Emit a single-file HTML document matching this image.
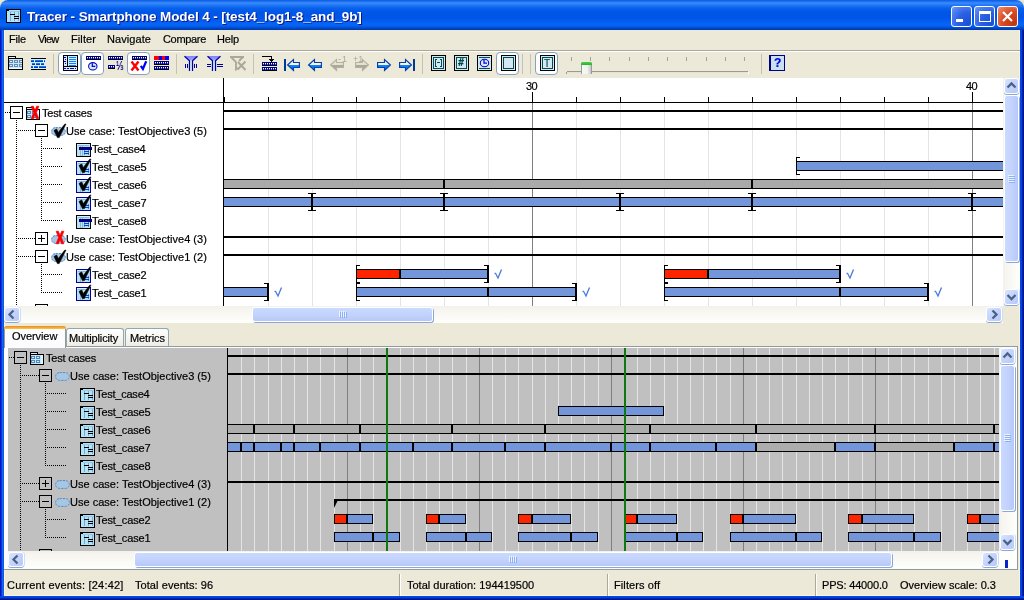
<!DOCTYPE html>
<html lang="en"><head><meta charset="utf-8"><title>Tracer - Smartphone Model 4</title>
<style>
html,body{margin:0;padding:0;}
body{width:1024px;height:600px;overflow:hidden;background:#ECE9D8;position:relative;font-family:"Liberation Sans",sans-serif;font-size:11px;color:#000;}
.a{position:absolute;}
.t{-webkit-text-stroke:0.2px currentColor;will-change:transform;position:absolute;white-space:nowrap;line-height:14px;height:14px;font-size:11px;}
svg{position:absolute;overflow:visible;}
.ce{shape-rendering:crispEdges;}
#title{position:absolute;left:0;top:0;width:1024px;height:30px;border-radius:8px 8px 0 0;
background:linear-gradient(to bottom,#0A5CE0 0px,#1668EC 1px,#3C8CFC 3px,#2278F6 5px,#0862EC 8px,#0056E6 12px,#0055E8 18px,#0560F2 22px,#0666F8 25px,#0058E2 27px,#0049CA 28px,#0038A8 30px);}
#corner-l,#corner-r{position:absolute;top:0;width:8px;height:8px;background:#EDE7C9;}
.ttl{-webkit-text-stroke:0;font-weight:bold;font-size:13.5px;color:#fff;text-shadow:1px 1px 0 #0A1883;line-height:16px;height:16px;}
.wb{position:absolute;width:21px;height:21px;top:6px;border-radius:3px;box-sizing:border-box;border:1px solid #fff;
background:radial-gradient(circle at 85% 85%,#1A50D8 0%,#2B5FE3 45%,#4A7CF0 75%,#6C9BFA 100%);}
.wb.x{background:radial-gradient(circle at 85% 85%,#C13511 0%,#D84A24 50%,#E8734F 80%,#F0987C 100%);}
.bl{position:absolute;left:0;top:30px;width:4px;height:570px;background:linear-gradient(to right,#0016C4 0,#0016C4 1px,#0A36DC 1px,#0A36DC 2px,#1464EE 2px,#1464EE 3px,#0E58E8 3px);}
.br{position:absolute;left:1020px;top:30px;width:4px;height:570px;background:linear-gradient(to right,#0A48E4 0,#0040E0 2px,#0022B0 2px,#0022B0 3px,#001488 3px);}
.bb{position:absolute;left:0;top:596px;width:1024px;height:4px;background:linear-gradient(to bottom,#0A48E4 0,#0040E0 2px,#0026B4 2px,#0026B4 3px,#001488 3px);}
.tbchk{position:absolute;top:52px;width:23px;height:23px;box-sizing:border-box;border:1px solid #86A2C0;border-radius:4px;background:#fff;}
.tbsep{position:absolute;top:54px;width:1px;height:20px;background:#C5C2B2;}
/* scrollbars */
.sbv{position:absolute;width:17px;background:linear-gradient(to right,#F3F1EC 0,#F6F5F0 20%,#FEFEFB 100%);}
.sbh{position:absolute;height:17px;background:linear-gradient(to bottom,#F3F1EC 0,#F6F5F0 20%,#FEFEFB 100%);}
.sbtn{position:absolute;width:15px;height:15px;box-sizing:border-box;border:1px solid #fff;border-radius:3px;
background:linear-gradient(135deg,#D9E4FF 0%,#C6D6FD 40%,#B7C9F5 100%);box-shadow:0 1px 0 #8DA6DA,1px 0 0 #D0DCF4;}
.sthv{position:absolute;width:15px;box-sizing:border-box;border:1px solid #fff;border-radius:3px;
background:linear-gradient(to right,#CAD9FE 0%,#C3D3FD 50%,#B6C8F6 100%);box-shadow:1px 1px 0 #8DA6DA;}
.sthh{position:absolute;height:15px;box-sizing:border-box;border:1px solid #fff;border-radius:3px;
background:linear-gradient(to bottom,#CAD9FE 0%,#C3D3FD 50%,#B6C8F6 100%);box-shadow:1px 1px 0 #8DA6DA;}
.tab{position:absolute;box-sizing:border-box;border:1px solid #91A7B4;border-bottom:none;border-radius:3px 3px 0 0;background:linear-gradient(to bottom,#FFFFFF 0,#F4F3EE 60%,#ECEBE4 100%);}
.tabsel{position:absolute;box-sizing:border-box;border:1px solid #919B9C;border-bottom:none;border-top:none;border-radius:3px 3px 0 0;background:#FCFCFE;}
.ssep{position:absolute;top:574px;width:1px;height:22px;background:#ACA899;box-shadow:1px 0 0 #fff;}
</style></head>
<body>
<div id="corner-l" style="left:0"></div><div id="corner-r" style="left:1016px"></div><div id="title"></div><svg class="ce" style="left:6px;top:9px" width="15" height="14" viewBox="0 0 15 14"><rect x="0" y="0" width="15" height="14" fill="#000"/><rect x="1" y="1" width="13" height="12" fill="#B4E4F4"/><rect x="4" y="2" width="1" height="10" fill="#78A8D8"/><rect x="8" y="2" width="1" height="10" fill="#78A8D8"/><rect x="12" y="2" width="1" height="10" fill="#78A8D8"/><rect x="3" y="2" width="11" height="1" fill="#98C8E8"/><rect x="1" y="1" width="2" height="1" fill="#000"/><rect x="4" y="5" width="5" height="1" fill="#000"/><rect x="8" y="7" width="5" height="1" fill="#000"/><rect x="8" y="9" width="5" height="1" fill="#000"/></svg><span id="t1" class="t ttl" style="left:27px;top:8px;letter-spacing:-0.100px;top:9px;">Tracer - Smartphone Model 4 - [test4_log1-8_and_9b]</span><div class="wb" style="left:951px"><svg class="ce" style="left:4px;top:12px" width="7" height="3" viewBox="0 0 7 3"><rect x="0" y="0" width="7" height="3" fill="#fff"/></svg></div><div class="wb" style="left:974px"><svg class="ce" style="left:4px;top:4px" width="12" height="12" viewBox="0 0 12 12"><rect x="0" y="0" width="12" height="3" fill="#fff"/><rect x="0" y="0" width="1" height="11" fill="#fff"/><rect x="11" y="0" width="1" height="11" fill="#fff"/><rect x="0" y="10" width="12" height="1" fill="#fff"/></svg></div><div class="wb x" style="left:997px"><svg class="" style="left:4px;top:4px" width="11" height="11" viewBox="0 0 11 11"><path d="M1 1 L10 10 M10 1 L1 10" fill="none" stroke="#fff" stroke-width="2.2" /></svg></div><div class="bl"></div><div class="br"></div><div class="bb"></div><div style="position:absolute;left:4px;top:30px;width:1px;height:566px;background:#FBF4DC;"></div><div style="position:absolute;left:1019px;top:30px;width:1px;height:566px;background:#FBF4DC;"></div><div style="position:absolute;left:4px;top:595px;width:1016px;height:1px;background:#FBF4DC;"></div><span id="t2" class="t " style="left:8.5px;top:32px;letter-spacing:-0.167px;">File</span><span id="t3" class="t " style="left:37.5px;top:32px;letter-spacing:-0.833px;">View</span><span id="t4" class="t " style="left:70.5px;top:32px;letter-spacing:0.100px;">Filter</span><span id="t5" class="t " style="left:106.5px;top:32px;letter-spacing:0.071px;">Navigate</span><span id="t6" class="t " style="left:162.5px;top:32px;letter-spacing:-0.333px;">Compare</span><span id="t7" class="t " style="left:216.5px;top:32px;letter-spacing:-0.167px;">Help</span><div style="position:absolute;left:4px;top:50px;width:1016px;height:1px;background:#ACA899;"></div><div style="position:absolute;left:4px;top:51px;width:1016px;height:1px;background:#fff;"></div><div class="tbchk" style="left:58px"></div><div class="tbchk" style="left:81px"></div><div class="tbchk" style="left:127px"></div><div class="tbchk" style="left:496px"></div><div class="tbchk" style="left:535px"></div><div class="tbsep" style="left:53px"></div><div class="tbsep" style="left:176px"></div><div class="tbsep" style="left:253px"></div><div class="tbsep" style="left:422px"></div><div class="tbsep" style="left:522px"></div><div class="tbsep" style="left:530px"></div><div class="tbsep" style="left:761px"></div><svg class="ce" style="left:0px;top:50px" width="1024" height="28" viewBox="0 0 1024 28"><path d="M8.5 19.5 V6.5 H15.5 V8.5 H22.5 V19.5 Z" fill="#CFE4F4" stroke="#000" stroke-width="1" /><rect x="9" y="7" width="6" height="1" fill="#E8F2FA"/><rect x="9" y="18" width="13" height="1" fill="#F4FAFF"/><rect x="8" y="8" width="8" height="1" fill="#000"/><rect x="9.5" y="10.5" width="3" height="2" fill="#DCEAF6" stroke="#5B8DB8"/><rect x="9.5" y="14.5" width="3" height="2" fill="#DCEAF6" stroke="#5B8DB8"/><rect x="14.5" y="10.5" width="3" height="2" fill="#DCEAF6" stroke="#5B8DB8"/><rect x="14.5" y="14.5" width="3" height="2" fill="#DCEAF6" stroke="#5B8DB8"/><path d="M22 10.5 H19.5 V12.5 H22" fill="#DCEAF6" stroke="#5B8DB8" stroke-width="1" /><path d="M22 14.5 H19.5 V16.5 H22" fill="#DCEAF6" stroke="#5B8DB8" stroke-width="1" /><rect x="31" y="8" width="15" height="12" fill="#D8ECF8"/><rect x="31" y="8" width="15" height="1" fill="#000"/><rect x="31" y="19" width="15" height="1" fill="#000"/><rect x="31" y="10" width="3" height="1" fill="#0A78F8"/><rect x="31" y="11" width="3" height="1" fill="#0040B0"/><rect x="35" y="10" width="8" height="1" fill="#0A78F8"/><rect x="35" y="11" width="8" height="1" fill="#0040B0"/><rect x="44" y="10" width="1" height="1" fill="#0A78F8"/><rect x="44" y="11" width="1" height="1" fill="#0040B0"/><rect x="32" y="13" width="3" height="1" fill="#0A78F8"/><rect x="32" y="14" width="3" height="1" fill="#0040B0"/><rect x="36" y="13" width="4" height="1" fill="#0A78F8"/><rect x="36" y="14" width="4" height="1" fill="#0040B0"/><rect x="41" y="13" width="3" height="1" fill="#0A78F8"/><rect x="41" y="14" width="3" height="1" fill="#0040B0"/><rect x="31" y="16" width="2" height="1" fill="#0A78F8"/><rect x="31" y="17" width="2" height="1" fill="#0040B0"/><rect x="34" y="16" width="4" height="1" fill="#0A78F8"/><rect x="34" y="17" width="4" height="1" fill="#0040B0"/><rect x="39" y="16" width="7" height="1" fill="#0A78F8"/><rect x="39" y="17" width="7" height="1" fill="#0040B0"/><rect x="63" y="5" width="15" height="16" fill="#000"/><rect x="64" y="6" width="13" height="14" fill="#D8ECF8"/><rect x="67" y="6" width="1" height="10" fill="#000"/><rect x="64" y="16" width="13" height="1" fill="#000"/><rect x="64" y="7" width="2" height="1" fill="#0000E0"/><rect x="65" y="9" width="1" height="1" fill="#0000E0"/><rect x="64" y="11" width="2" height="1" fill="#0000E0"/><rect x="65" y="13" width="1" height="1" fill="#0000E0"/><rect x="69" y="7" width="7" height="1" fill="#0A80FF"/><rect x="69" y="9" width="7" height="1" fill="#0A80FF"/><rect x="69" y="11" width="7" height="1" fill="#0A80FF"/><rect x="69" y="13" width="7" height="1" fill="#0A80FF"/><rect x="69" y="15" width="7" height="1" fill="#0A80FF"/><rect x="64" y="18" width="2" height="1" fill="#0000E0"/><rect x="67" y="18" width="2" height="1" fill="#0000E0"/><rect x="70" y="18" width="4" height="1" fill="#0000E0"/><rect x="75" y="18" width="1" height="1" fill="#0000E0"/><rect x="86" y="6" width="15" height="3" fill="#0000A0"/><rect x="86" y="6" width="15" height="1" fill="#000070"/><rect x="86" y="9" width="15" height="1" fill="#000"/><rect x="87" y="7" width="1" height="1" fill="#fff"/><rect x="87" y="8" width="1" height="1" fill="#4060FF"/><rect x="89" y="7" width="1" height="1" fill="#fff"/><rect x="89" y="8" width="1" height="1" fill="#4060FF"/><rect x="91" y="7" width="1" height="1" fill="#fff"/><rect x="91" y="8" width="1" height="1" fill="#4060FF"/><rect x="93" y="7" width="1" height="1" fill="#fff"/><rect x="93" y="8" width="1" height="1" fill="#4060FF"/><rect x="95" y="7" width="1" height="1" fill="#fff"/><rect x="95" y="8" width="1" height="1" fill="#4060FF"/><rect x="97" y="7" width="1" height="1" fill="#fff"/><rect x="97" y="8" width="1" height="1" fill="#4060FF"/><rect x="99" y="7" width="1" height="1" fill="#fff"/><rect x="99" y="8" width="1" height="1" fill="#4060FF"/><rect x="108" y="6" width="15" height="3" fill="#0000A0"/><rect x="108" y="6" width="15" height="1" fill="#000070"/><rect x="108" y="9" width="15" height="1" fill="#000"/><rect x="109" y="7" width="1" height="1" fill="#fff"/><rect x="109" y="8" width="1" height="1" fill="#4060FF"/><rect x="111" y="7" width="1" height="1" fill="#fff"/><rect x="111" y="8" width="1" height="1" fill="#4060FF"/><rect x="113" y="7" width="1" height="1" fill="#fff"/><rect x="113" y="8" width="1" height="1" fill="#4060FF"/><rect x="115" y="7" width="1" height="1" fill="#fff"/><rect x="115" y="8" width="1" height="1" fill="#4060FF"/><rect x="117" y="7" width="1" height="1" fill="#fff"/><rect x="117" y="8" width="1" height="1" fill="#4060FF"/><rect x="119" y="7" width="1" height="1" fill="#fff"/><rect x="119" y="8" width="1" height="1" fill="#4060FF"/><rect x="121" y="7" width="1" height="1" fill="#fff"/><rect x="121" y="8" width="1" height="1" fill="#4060FF"/><rect x="108" y="15" width="7" height="3" fill="#0000A0"/><rect x="108" y="15" width="7" height="1" fill="#000070"/><rect x="108" y="18" width="7" height="1" fill="#000"/><rect x="109" y="16" width="1" height="1" fill="#fff"/><rect x="109" y="17" width="1" height="1" fill="#4060FF"/><rect x="111" y="16" width="1" height="1" fill="#fff"/><rect x="111" y="17" width="1" height="1" fill="#4060FF"/><rect x="113" y="16" width="1" height="1" fill="#fff"/><rect x="113" y="17" width="1" height="1" fill="#4060FF"/><rect x="132" y="6" width="15" height="3" fill="#0000A0"/><rect x="132" y="6" width="15" height="1" fill="#000070"/><rect x="132" y="9" width="15" height="1" fill="#000"/><rect x="133" y="7" width="1" height="1" fill="#fff"/><rect x="133" y="8" width="1" height="1" fill="#4060FF"/><rect x="135" y="7" width="1" height="1" fill="#fff"/><rect x="135" y="8" width="1" height="1" fill="#4060FF"/><rect x="137" y="7" width="1" height="1" fill="#fff"/><rect x="137" y="8" width="1" height="1" fill="#4060FF"/><rect x="139" y="7" width="1" height="1" fill="#fff"/><rect x="139" y="8" width="1" height="1" fill="#4060FF"/><rect x="141" y="7" width="1" height="1" fill="#fff"/><rect x="141" y="8" width="1" height="1" fill="#4060FF"/><rect x="143" y="7" width="1" height="1" fill="#fff"/><rect x="143" y="8" width="1" height="1" fill="#4060FF"/><rect x="145" y="7" width="1" height="1" fill="#fff"/><rect x="145" y="8" width="1" height="1" fill="#4060FF"/><rect x="154" y="6" width="15" height="4" fill="#0000FF"/><rect x="154" y="6" width="5" height="4" fill="#FF0000"/><rect x="162" y="6" width="3" height="4" fill="#FF0000"/><rect x="154" y="11" width="15" height="3" fill="#0000A0"/><rect x="154" y="11" width="15" height="1" fill="#000070"/><rect x="154" y="14" width="15" height="1" fill="#000"/><rect x="155" y="12" width="1" height="1" fill="#fff"/><rect x="155" y="13" width="1" height="1" fill="#4060FF"/><rect x="157" y="12" width="1" height="1" fill="#fff"/><rect x="157" y="13" width="1" height="1" fill="#4060FF"/><rect x="159" y="12" width="1" height="1" fill="#fff"/><rect x="159" y="13" width="1" height="1" fill="#4060FF"/><rect x="161" y="12" width="1" height="1" fill="#fff"/><rect x="161" y="13" width="1" height="1" fill="#4060FF"/><rect x="163" y="12" width="1" height="1" fill="#fff"/><rect x="163" y="13" width="1" height="1" fill="#4060FF"/><rect x="165" y="12" width="1" height="1" fill="#fff"/><rect x="165" y="13" width="1" height="1" fill="#4060FF"/><rect x="167" y="12" width="1" height="1" fill="#fff"/><rect x="167" y="13" width="1" height="1" fill="#4060FF"/><rect x="154" y="16" width="15" height="3" fill="#0000A0"/><rect x="154" y="16" width="15" height="1" fill="#000070"/><rect x="154" y="19" width="15" height="1" fill="#000"/><rect x="155" y="17" width="1" height="1" fill="#fff"/><rect x="155" y="18" width="1" height="1" fill="#4060FF"/><rect x="157" y="17" width="1" height="1" fill="#fff"/><rect x="157" y="18" width="1" height="1" fill="#4060FF"/><rect x="159" y="17" width="1" height="1" fill="#fff"/><rect x="159" y="18" width="1" height="1" fill="#4060FF"/><rect x="161" y="17" width="1" height="1" fill="#fff"/><rect x="161" y="18" width="1" height="1" fill="#4060FF"/><rect x="163" y="17" width="1" height="1" fill="#fff"/><rect x="163" y="18" width="1" height="1" fill="#4060FF"/><rect x="165" y="17" width="1" height="1" fill="#fff"/><rect x="165" y="18" width="1" height="1" fill="#4060FF"/><rect x="167" y="17" width="1" height="1" fill="#fff"/><rect x="167" y="18" width="1" height="1" fill="#4060FF"/><rect x="185" y="14" width="1" height="4" fill="#0000A0"/><rect x="187" y="14" width="1" height="4" fill="#0000A0"/><rect x="194" y="14" width="1" height="4" fill="#0000A0"/><rect x="196" y="14" width="1" height="4" fill="#0000A0"/><rect x="207" y="14" width="4" height="1" fill="#0000A0"/><rect x="207" y="16" width="4" height="1" fill="#0000A0"/><rect x="217" y="14" width="6" height="1" fill="#0000A0"/><rect x="217" y="16" width="6" height="1" fill="#0000A0"/><rect x="262" y="12" width="15" height="3" fill="#0000A0"/><rect x="262" y="12" width="15" height="1" fill="#000070"/><rect x="262" y="15" width="15" height="1" fill="#000"/><rect x="263" y="13" width="1" height="1" fill="#fff"/><rect x="263" y="14" width="1" height="1" fill="#4060FF"/><rect x="265" y="13" width="1" height="1" fill="#fff"/><rect x="265" y="14" width="1" height="1" fill="#4060FF"/><rect x="267" y="13" width="1" height="1" fill="#fff"/><rect x="267" y="14" width="1" height="1" fill="#4060FF"/><rect x="269" y="13" width="1" height="1" fill="#fff"/><rect x="269" y="14" width="1" height="1" fill="#4060FF"/><rect x="271" y="13" width="1" height="1" fill="#fff"/><rect x="271" y="14" width="1" height="1" fill="#4060FF"/><rect x="273" y="13" width="1" height="1" fill="#fff"/><rect x="273" y="14" width="1" height="1" fill="#4060FF"/><rect x="275" y="13" width="1" height="1" fill="#fff"/><rect x="275" y="14" width="1" height="1" fill="#4060FF"/><rect x="262" y="17" width="15" height="3" fill="#0000A0"/><rect x="262" y="17" width="15" height="1" fill="#000070"/><rect x="262" y="20" width="15" height="1" fill="#000"/><rect x="263" y="18" width="1" height="1" fill="#fff"/><rect x="263" y="19" width="1" height="1" fill="#4060FF"/><rect x="265" y="18" width="1" height="1" fill="#fff"/><rect x="265" y="19" width="1" height="1" fill="#4060FF"/><rect x="267" y="18" width="1" height="1" fill="#fff"/><rect x="267" y="19" width="1" height="1" fill="#4060FF"/><rect x="269" y="18" width="1" height="1" fill="#fff"/><rect x="269" y="19" width="1" height="1" fill="#4060FF"/><rect x="271" y="18" width="1" height="1" fill="#fff"/><rect x="271" y="19" width="1" height="1" fill="#4060FF"/><rect x="273" y="18" width="1" height="1" fill="#fff"/><rect x="273" y="19" width="1" height="1" fill="#4060FF"/><rect x="275" y="18" width="1" height="1" fill="#fff"/><rect x="275" y="19" width="1" height="1" fill="#4060FF"/><rect x="262" y="6" width="10" height="1" fill="#000"/><rect x="271" y="6" width="1" height="6" fill="#000"/><rect x="269" y="9" width="5" height="1" fill="#000"/><rect x="270" y="10" width="3" height="1" fill="#000"/><rect x="284" y="9" width="2" height="12" fill="#003898"/><rect x="413" y="9" width="2" height="12" fill="#003898"/><rect x="431" y="5" width="15" height="16" fill="#000"/><rect x="432" y="6" width="13" height="14" fill="#D4E8F4"/><rect x="433" y="7" width="11" height="1" fill="#005050"/><rect x="433" y="18" width="11" height="1" fill="#005050"/><rect x="433" y="7" width="1" height="12" fill="#005050"/><rect x="443" y="7" width="1" height="12" fill="#005050"/><rect x="435" y="9" width="1" height="8" fill="#005050"/><rect x="436" y="9" width="1" height="1" fill="#005050"/><rect x="436" y="16" width="1" height="1" fill="#005050"/><rect x="441" y="9" width="1" height="8" fill="#005050"/><rect x="440" y="9" width="1" height="1" fill="#005050"/><rect x="440" y="16" width="1" height="1" fill="#005050"/><rect x="437" y="12" width="3" height="1" fill="#005050"/><rect x="454" y="5" width="15" height="16" fill="#000"/><rect x="455" y="6" width="13" height="14" fill="#D4E8F4"/><rect x="456" y="7" width="11" height="1" fill="#005050"/><rect x="456" y="18" width="11" height="1" fill="#005050"/><rect x="456" y="7" width="1" height="12" fill="#005050"/><rect x="466" y="7" width="1" height="12" fill="#005050"/><rect x="477" y="5" width="15" height="16" fill="#000"/><rect x="478" y="6" width="13" height="14" fill="#D4E8F4"/><rect x="479" y="7" width="11" height="1" fill="#005050"/><rect x="479" y="18" width="11" height="1" fill="#005050"/><rect x="501" y="5" width="15" height="16" fill="#000"/><rect x="502" y="6" width="13" height="14" fill="#D4E8F4"/><rect x="503" y="7" width="11" height="1" fill="#005050"/><rect x="503" y="18" width="11" height="1" fill="#005050"/><rect x="503" y="7" width="1" height="12" fill="#005050"/><rect x="513" y="7" width="1" height="12" fill="#005050"/><rect x="540" y="5" width="15" height="16" fill="#000"/><rect x="541" y="6" width="13" height="14" fill="#D4E8F4"/><rect x="542" y="7" width="11" height="1" fill="#005050"/><rect x="542" y="18" width="11" height="1" fill="#005050"/><rect x="542" y="7" width="1" height="12" fill="#005050"/><rect x="552" y="7" width="1" height="12" fill="#005050"/><rect x="571" y="7" width="1" height="4" fill="#A5A293"/><rect x="590" y="7" width="1" height="4" fill="#A5A293"/><rect x="609" y="7" width="1" height="4" fill="#A5A293"/><rect x="629" y="7" width="1" height="4" fill="#A5A293"/><rect x="648" y="7" width="1" height="4" fill="#A5A293"/><rect x="667" y="7" width="1" height="4" fill="#A5A293"/><rect x="686" y="7" width="1" height="4" fill="#A5A293"/><rect x="706" y="7" width="1" height="4" fill="#A5A293"/><rect x="725" y="7" width="1" height="4" fill="#A5A293"/><rect x="744" y="7" width="1" height="4" fill="#A5A293"/><rect x="567" y="21" width="181" height="1" fill="#9D9A8B"/><rect x="566" y="22" width="1" height="2" fill="#9D9A8B"/><rect x="567" y="22" width="181" height="1" fill="#E6E3D4"/><rect x="748" y="22" width="1" height="2" fill="#fff"/><rect x="769" y="5" width="16" height="16" fill="#000080"/><rect x="771" y="6" width="13" height="14" fill="#C8E0F0"/></svg><svg class="" style="left:0px;top:50px" width="1024" height="28" viewBox="0 0 1024 28"><ellipse cx="92.8" cy="16.3" rx="4.2" ry="3.7" fill="#D8ECF4" stroke="#0000C8" stroke-width="1.05"/><path d="M92.3 13.3 V16.3 H95.3" fill="none" stroke="#0000E0" stroke-width="1.25" /><ellipse cx="484.5" cy="13" rx="4.2" ry="3.7" fill="#D8ECF4" stroke="#0000C8" stroke-width="1.05"/><path d="M484 10 V13 H487" fill="none" stroke="#0000E0" stroke-width="1.25" /><path d="M131.5 11.5 L138.5 20.5 M138.5 11.5 L131.5 20.5" fill="none" stroke="#FF0000" stroke-width="2.4" /><path d="M140.8 15.8 L142.9 19 L146.2 11.3" fill="none" stroke="#0000F0" stroke-width="2.2" /><defs><linearGradient id="gfu" x1="0" y1="0" x2="0" y2="1"><stop offset="0" stop-color="#8080FF"/><stop offset="0.22" stop-color="#9898FF"/><stop offset="0.36" stop-color="#D8F0F8"/><stop offset="1" stop-color="#E0F8FF"/></linearGradient></defs><path d="M184.5 6 H197.5 L192.5 10.8 V21 H189.5 V10.8 Z" fill="url(#gfu)" stroke="none" stroke-width="1" /><path d="M184.5 6.3 L189.5 10.8 V21 M197.5 6.3 L192.5 10.8 V21" fill="none" stroke="#0000A0" stroke-width="1.25" /><path d="M207.5 6 H220.5 L215.5 10.8 V21 H212.5 V10.8 Z" fill="url(#gfu)" stroke="none" stroke-width="1" /><path d="M207.5 6.3 L212.5 10.8 V21 M220.5 6.3 L215.5 10.8 V21" fill="none" stroke="#0000A0" stroke-width="1.25" /><path d="M230 7 H244 M231 7 L236 12 V19.5 L238 18 M243 7 L239 11" fill="none" stroke="#ACA899" stroke-width="1.8" /><path d="M238 12 L245.5 20 M245.5 11.5 L237.5 19.5" fill="none" stroke="#ACA899" stroke-width="2" /><defs><linearGradient id="gar" x1="0" y1="0" x2="0" y2="1"><stop offset="0" stop-color="#FFFCF2"/><stop offset="0.48" stop-color="#FAF2DE"/><stop offset="0.52" stop-color="#0A84FF"/><stop offset="1" stop-color="#0070F0"/></linearGradient><linearGradient id="gdis" x1="0" y1="0" x2="0" y2="1"><stop offset="0" stop-color="#ECE9D8"/><stop offset="0.48" stop-color="#E4E1D0"/><stop offset="0.52" stop-color="#ACA899"/><stop offset="1" stop-color="#ACA899"/></linearGradient></defs><path d="M287.6 15 L293.5 9.6 V12.5 H299.4 V17.5 H293.5 V20.4 Z" fill="url(#gar)" stroke="#0040A8" stroke-width="1.15" /><path d="M308.6 15 L314.5 9.6 V12.5 H321.4 V17.5 H314.5 V20.4 Z" fill="url(#gar)" stroke="#0040A8" stroke-width="1.15" /><path d="M330.6 15 L336.5 9.6 V12.5 H343.4 V17.5 H336.5 V20.4 Z" fill="url(#gdis)" stroke="#B4B1A2" stroke-width="1.15" /><path d="M368.4 15 L362.5 9.6 V12.5 H355.6 V17.5 H362.5 V20.4 Z" fill="url(#gdis)" stroke="#B4B1A2" stroke-width="1.15" /><path d="M390.4 15 L384.5 9.6 V12.5 H377.6 V17.5 H384.5 V20.4 Z" fill="url(#gar)" stroke="#0040A8" stroke-width="1.15" /><path d="M411.4 15 L405.5 9.6 V12.5 H399.6 V17.5 H405.5 V20.4 Z" fill="url(#gar)" stroke="#0040A8" stroke-width="1.15" /></svg><div class="a" style="left:581px;top:62px;width:11px;height:12px;box-sizing:border-box;border:1px solid #8E9CAC;border-bottom:none;border-top:none;border-radius:2px 2px 0 0;background:linear-gradient(to right,#F7F7F4 0,#F3F3EF 60%,#C8C6B8 100%);"><div style="height:3px;margin:0 -1px;background:linear-gradient(to bottom,#48D050,#22B822);border-radius:2px 2px 0 0"></div></div><span class="t" style="left:774px;top:56px;font-size:12px;font-weight:bold;color:#0000E0;">?</span><span class="t" style="-webkit-text-stroke:0;left:115.5px;top:60px;font-size:12px;line-height:12px;height:12px;color:#000080;font-weight:bold;transform:scaleX(0.74);transform-origin:0 0;">&#8531;</span><span class="t" style="-webkit-text-stroke:0;left:337.5px;top:55.2px;font-size:9px;line-height:9px;height:9px;color:#ACA899;letter-spacing:1px;">-1</span><span class="t" style="-webkit-text-stroke:0;left:352.5px;top:55.2px;font-size:9px;line-height:9px;height:9px;color:#ACA899;">+1</span><span class="t" style="-webkit-text-stroke:0;left:458px;top:58px;font-size:10px;line-height:10px;height:10px;color:#004848;font-weight:bold;font-family:'DejaVu Sans Mono',monospace;">#</span><span class="t" style="-webkit-text-stroke:0;left:544.4px;top:59px;font-size:10px;line-height:10px;height:10px;color:#004848;-webkit-text-stroke:0.15px #004848;">T</span><div style="position:absolute;left:4px;top:78px;width:999px;height:228px;background:#fff;"></div><div style="position:absolute;left:268px;top:103px;width:1px;height:203px;background:#E4E4E4;"></div><div style="position:absolute;left:268px;top:97px;width:1px;height:6px;background:#000;"></div><div style="position:absolute;left:312px;top:103px;width:1px;height:203px;background:#E4E4E4;"></div><div style="position:absolute;left:312px;top:97px;width:1px;height:6px;background:#000;"></div><div style="position:absolute;left:356px;top:103px;width:1px;height:203px;background:#E4E4E4;"></div><div style="position:absolute;left:356px;top:97px;width:1px;height:6px;background:#000;"></div><div style="position:absolute;left:400px;top:103px;width:1px;height:203px;background:#E4E4E4;"></div><div style="position:absolute;left:400px;top:97px;width:1px;height:6px;background:#000;"></div><div style="position:absolute;left:444px;top:103px;width:1px;height:203px;background:#E4E4E4;"></div><div style="position:absolute;left:444px;top:97px;width:1px;height:6px;background:#000;"></div><div style="position:absolute;left:488px;top:103px;width:1px;height:203px;background:#E4E4E4;"></div><div style="position:absolute;left:488px;top:97px;width:1px;height:6px;background:#000;"></div><div style="position:absolute;left:532px;top:103px;width:1px;height:203px;background:#7F7F7F;"></div><div style="position:absolute;left:532px;top:92px;width:1px;height:11px;background:#000;"></div><div style="position:absolute;left:576px;top:103px;width:1px;height:203px;background:#E4E4E4;"></div><div style="position:absolute;left:576px;top:97px;width:1px;height:6px;background:#000;"></div><div style="position:absolute;left:620px;top:103px;width:1px;height:203px;background:#E4E4E4;"></div><div style="position:absolute;left:620px;top:97px;width:1px;height:6px;background:#000;"></div><div style="position:absolute;left:664px;top:103px;width:1px;height:203px;background:#E4E4E4;"></div><div style="position:absolute;left:664px;top:97px;width:1px;height:6px;background:#000;"></div><div style="position:absolute;left:708px;top:103px;width:1px;height:203px;background:#E4E4E4;"></div><div style="position:absolute;left:708px;top:97px;width:1px;height:6px;background:#000;"></div><div style="position:absolute;left:752px;top:103px;width:1px;height:203px;background:#E4E4E4;"></div><div style="position:absolute;left:752px;top:97px;width:1px;height:6px;background:#000;"></div><div style="position:absolute;left:796px;top:103px;width:1px;height:203px;background:#E4E4E4;"></div><div style="position:absolute;left:796px;top:97px;width:1px;height:6px;background:#000;"></div><div style="position:absolute;left:840px;top:103px;width:1px;height:203px;background:#E4E4E4;"></div><div style="position:absolute;left:840px;top:97px;width:1px;height:6px;background:#000;"></div><div style="position:absolute;left:884px;top:103px;width:1px;height:203px;background:#E4E4E4;"></div><div style="position:absolute;left:884px;top:97px;width:1px;height:6px;background:#000;"></div><div style="position:absolute;left:928px;top:103px;width:1px;height:203px;background:#E4E4E4;"></div><div style="position:absolute;left:928px;top:97px;width:1px;height:6px;background:#000;"></div><div style="position:absolute;left:972px;top:103px;width:1px;height:203px;background:#7F7F7F;"></div><div style="position:absolute;left:972px;top:92px;width:1px;height:11px;background:#000;"></div><div style="position:absolute;left:224px;top:97px;width:1px;height:6px;background:#000;"></div><span id="t8" class="t " style="left:526px;top:79px;letter-spacing:-0.500px;">30</span><span id="t9" class="t " style="left:966px;top:79px;letter-spacing:-0.500px;">40</span><div style="position:absolute;left:4px;top:102px;width:999px;height:1px;background:#000;"></div><div style="position:absolute;left:223px;top:78px;width:1px;height:228px;background:#000;"></div><div class="a" style="left:0;top:0;width:1003px;height:306px;overflow:hidden;"><div style="position:absolute;left:224px;top:110px;width:779px;height:2px;background:#000;"></div><div style="position:absolute;left:224px;top:128px;width:779px;height:2px;background:#000;"></div><div style="position:absolute;left:224px;top:236px;width:779px;height:2px;background:#000;"></div><div style="position:absolute;left:224px;top:254px;width:779px;height:2px;background:#000;"></div><div class="a" style="left:796px;top:161px;width:207px;height:10px;box-sizing:border-box;border-top:1px solid #000;border-bottom:1px solid #000;background:#7396DB"></div><div style="position:absolute;left:796px;top:157px;width:1px;height:18px;background:#000;"></div><div style="position:absolute;left:796px;top:157px;width:4px;height:1px;background:#000;"></div><div style="position:absolute;left:796px;top:174px;width:4px;height:1px;background:#000;"></div><div class="a" style="left:224px;top:179px;width:779px;height:10px;box-sizing:border-box;border-top:1px solid #000;border-bottom:1px solid #000;background:#AAAAAA"></div><div style="position:absolute;left:443px;top:179px;width:2px;height:10px;background:#000;"></div><div style="position:absolute;left:751px;top:179px;width:2px;height:10px;background:#000;"></div><div class="a" style="left:224px;top:197px;width:779px;height:10px;box-sizing:border-box;border-top:1px solid #000;border-bottom:1px solid #000;background:#7396DB"></div><div style="position:absolute;left:311px;top:193px;width:2px;height:18px;background:#000;"></div><div style="position:absolute;left:308px;top:193px;width:8px;height:1px;background:#000;"></div><div style="position:absolute;left:308px;top:210px;width:8px;height:1px;background:#000;"></div><div style="position:absolute;left:443px;top:193px;width:2px;height:18px;background:#000;"></div><div style="position:absolute;left:440px;top:193px;width:8px;height:1px;background:#000;"></div><div style="position:absolute;left:440px;top:210px;width:8px;height:1px;background:#000;"></div><div style="position:absolute;left:619px;top:193px;width:2px;height:18px;background:#000;"></div><div style="position:absolute;left:616px;top:193px;width:8px;height:1px;background:#000;"></div><div style="position:absolute;left:616px;top:210px;width:8px;height:1px;background:#000;"></div><div style="position:absolute;left:751px;top:193px;width:2px;height:18px;background:#000;"></div><div style="position:absolute;left:748px;top:193px;width:8px;height:1px;background:#000;"></div><div style="position:absolute;left:748px;top:210px;width:8px;height:1px;background:#000;"></div><div style="position:absolute;left:971px;top:193px;width:2px;height:18px;background:#000;"></div><div style="position:absolute;left:968px;top:193px;width:8px;height:1px;background:#000;"></div><div style="position:absolute;left:968px;top:210px;width:8px;height:1px;background:#000;"></div><div class="a" style="left:356px;top:269px;width:44px;height:10px;box-sizing:border-box;border-top:1px solid #000;border-bottom:1px solid #000;background:#FF2400"></div><div class="a" style="left:400px;top:269px;width:88px;height:10px;box-sizing:border-box;border-top:1px solid #000;border-bottom:1px solid #000;background:#7396DB"></div><div style="position:absolute;left:399px;top:269px;width:2px;height:10px;background:#000;"></div><div style="position:absolute;left:356px;top:265px;width:1px;height:18px;background:#000;"></div><div style="position:absolute;left:356px;top:265px;width:4px;height:1px;background:#000;"></div><div style="position:absolute;left:356px;top:282px;width:4px;height:1px;background:#000;"></div><div style="position:absolute;left:487px;top:265px;width:2px;height:18px;background:#000;"></div><div style="position:absolute;left:484px;top:265px;width:4px;height:1px;background:#000;"></div><div style="position:absolute;left:484px;top:282px;width:4px;height:1px;background:#000;"></div><svg class="" style="left:494px;top:270px" width="8" height="9" viewBox="0 0 8 9"><path d="M0.5 3.3 L1.5 3.3 L4 8 L7.5 -0.5" fill="none" stroke="#4F7CDA" stroke-width="1.35" /></svg><div class="a" style="left:664px;top:269px;width:44px;height:10px;box-sizing:border-box;border-top:1px solid #000;border-bottom:1px solid #000;background:#FF2400"></div><div class="a" style="left:708px;top:269px;width:132px;height:10px;box-sizing:border-box;border-top:1px solid #000;border-bottom:1px solid #000;background:#7396DB"></div><div style="position:absolute;left:707px;top:269px;width:2px;height:10px;background:#000;"></div><div style="position:absolute;left:664px;top:265px;width:1px;height:18px;background:#000;"></div><div style="position:absolute;left:664px;top:265px;width:4px;height:1px;background:#000;"></div><div style="position:absolute;left:664px;top:282px;width:4px;height:1px;background:#000;"></div><div style="position:absolute;left:839px;top:265px;width:2px;height:18px;background:#000;"></div><div style="position:absolute;left:836px;top:265px;width:4px;height:1px;background:#000;"></div><div style="position:absolute;left:836px;top:282px;width:4px;height:1px;background:#000;"></div><svg class="" style="left:846px;top:270px" width="8" height="9" viewBox="0 0 8 9"><path d="M0.5 3.3 L1.5 3.3 L4 8 L7.5 -0.5" fill="none" stroke="#4F7CDA" stroke-width="1.35" /></svg><div class="a" style="left:224px;top:287px;width:44px;height:10px;box-sizing:border-box;border-top:1px solid #000;border-bottom:1px solid #000;background:#7396DB"></div><div style="position:absolute;left:267px;top:283px;width:2px;height:18px;background:#000;"></div><div style="position:absolute;left:264px;top:283px;width:4px;height:1px;background:#000;"></div><div style="position:absolute;left:264px;top:300px;width:4px;height:1px;background:#000;"></div><svg class="" style="left:274px;top:288px" width="8" height="9" viewBox="0 0 8 9"><path d="M0.5 3.3 L1.5 3.3 L4 8 L7.5 -0.5" fill="none" stroke="#4F7CDA" stroke-width="1.35" /></svg><div class="a" style="left:356px;top:287px;width:220px;height:10px;box-sizing:border-box;border-top:1px solid #000;border-bottom:1px solid #000;background:#7396DB"></div><div style="position:absolute;left:487px;top:287px;width:2px;height:10px;background:#000;"></div><div style="position:absolute;left:356px;top:283px;width:1px;height:18px;background:#000;"></div><div style="position:absolute;left:356px;top:283px;width:4px;height:1px;background:#000;"></div><div style="position:absolute;left:356px;top:300px;width:4px;height:1px;background:#000;"></div><div style="position:absolute;left:575px;top:283px;width:2px;height:18px;background:#000;"></div><div style="position:absolute;left:572px;top:283px;width:4px;height:1px;background:#000;"></div><div style="position:absolute;left:572px;top:300px;width:4px;height:1px;background:#000;"></div><svg class="" style="left:582px;top:288px" width="8" height="9" viewBox="0 0 8 9"><path d="M0.5 3.3 L1.5 3.3 L4 8 L7.5 -0.5" fill="none" stroke="#4F7CDA" stroke-width="1.35" /></svg><div class="a" style="left:664px;top:287px;width:264px;height:10px;box-sizing:border-box;border-top:1px solid #000;border-bottom:1px solid #000;background:#7396DB"></div><div style="position:absolute;left:839px;top:287px;width:2px;height:10px;background:#000;"></div><div style="position:absolute;left:664px;top:283px;width:1px;height:18px;background:#000;"></div><div style="position:absolute;left:664px;top:283px;width:4px;height:1px;background:#000;"></div><div style="position:absolute;left:664px;top:300px;width:4px;height:1px;background:#000;"></div><div style="position:absolute;left:927px;top:283px;width:2px;height:18px;background:#000;"></div><div style="position:absolute;left:924px;top:283px;width:4px;height:1px;background:#000;"></div><div style="position:absolute;left:924px;top:300px;width:4px;height:1px;background:#000;"></div><svg class="" style="left:934px;top:288px" width="8" height="9" viewBox="0 0 8 9"><path d="M0.5 3.3 L1.5 3.3 L4 8 L7.5 -0.5" fill="none" stroke="#4F7CDA" stroke-width="1.35" /></svg></div><div class="a" style="left:4px;top:103px;width:219px;height:203px;overflow:hidden;"><div class="a" style="left:-4px;top:-103px;"><div class="a" style="left:5px;top:112px;width:5px;height:1px;background:repeating-linear-gradient(to right,#000 0,#000 1px,transparent 1px,transparent 2px)"></div><div class="a" style="left:16px;top:120px;width:1px;height:200px;background:repeating-linear-gradient(to bottom,#000 0,#000 1px,transparent 1px,transparent 2px)"></div><div class="a" style="left:41px;top:138px;width:1px;height:83px;background:repeating-linear-gradient(to bottom,#000 0,#000 1px,transparent 1px,transparent 2px)"></div><div class="a" style="left:41px;top:264px;width:1px;height:29px;background:repeating-linear-gradient(to bottom,#000 0,#000 1px,transparent 1px,transparent 2px)"></div><div class="a" style="left:10px;top:106px;width:13px;height:13px;box-sizing:border-box;border:1px solid #000;background:#fff"></div><div style="position:absolute;left:13px;top:112px;width:7px;height:1px;background:#000;"></div><svg class="ce" style="left:26px;top:107px" width="14" height="13" viewBox="0 0 14 13"><path d="M0.5 12.5 V0.5 H7.5 V2.5 H13.5 V12.5 Z" fill="#D4E8F4" stroke="#000" stroke-width="1" /><rect x="0" y="2" width="8" height="1" fill="#000"/><rect x="1" y="1" width="6" height="1" fill="#E8E8E8"/><rect x="1" y="3" width="10" height="9" fill="#CCE4F6"/><rect x="11" y="3" width="2" height="9" fill="#E0F6FF"/><rect x="1.5" y="4.5" width="3" height="2" fill="#D8ECF8" stroke="#4A8ABE"/><rect x="1.5" y="8.5" width="3" height="2" fill="#D8ECF8" stroke="#4A8ABE"/><rect x="6.5" y="4.5" width="3" height="2" fill="#D8ECF8" stroke="#4A8ABE"/><rect x="6.5" y="8.5" width="3" height="2" fill="#D8ECF8" stroke="#4A8ABE"/></svg><svg class="" style="left:31px;top:106px" width="9" height="13" viewBox="0 0 9 13"><path d="M0 0.3 L2.3 0 L4 4 L5.7 0 L8 0.3 L5.5 6.5 L8 12.7 L5.7 13 L4 9 L2.3 13 L0 12.7 L2.5 6.5 Z" fill="#FF0000" stroke="#FF0000" stroke-width="0.5" /></svg><span id="t10" class="t " style="left:42px;top:106px;letter-spacing:-0.189px;">Test cases</span><div class="a" style="left:18px;top:130px;width:17px;height:1px;background:repeating-linear-gradient(to right,#000 0,#000 1px,transparent 1px,transparent 2px)"></div><div class="a" style="left:35px;top:124px;width:13px;height:13px;box-sizing:border-box;border:1px solid #000;background:#fff"></div><div style="position:absolute;left:38px;top:130px;width:7px;height:1px;background:#000;"></div><svg class="" style="left:51px;top:127px" width="15" height="9" viewBox="0 0 15 9"><rect x="0.6" y="0.6" width="13.8" height="7.8" rx="4" ry="3.9" fill="#A9C6E0" stroke="#4A8AD0" stroke-width="1" stroke-dasharray="2.2 1.1"/></svg><svg class="" style="left:53.5px;top:124px" width="13" height="14" viewBox="0 0 13 14"><path d="M0 6.5 L2.6 5 L4.3 8.6 L10.6 0.3 L12 0 L5.2 13.6 L3.4 13.6 Z" fill="#000" stroke="#000" stroke-width="0.6" /></svg><span id="t11" class="t " style="left:66px;top:124px;letter-spacing:0.015px;">Use case: TestObjective3 (5)</span><div class="a" style="left:18px;top:238px;width:17px;height:1px;background:repeating-linear-gradient(to right,#000 0,#000 1px,transparent 1px,transparent 2px)"></div><div class="a" style="left:35px;top:232px;width:13px;height:13px;box-sizing:border-box;border:1px solid #000;background:#fff"></div><div style="position:absolute;left:38px;top:238px;width:7px;height:1px;background:#000;"></div><div style="position:absolute;left:41px;top:235px;width:1px;height:7px;background:#000;"></div><svg class="" style="left:51px;top:235px" width="15" height="9" viewBox="0 0 15 9"><rect x="0.6" y="0.6" width="13.8" height="7.8" rx="4" ry="3.9" fill="#A9C6E0" stroke="#4A8AD0" stroke-width="1" stroke-dasharray="2.2 1.1"/></svg><svg class="" style="left:56px;top:231px" width="9" height="13" viewBox="0 0 9 13"><path d="M0 0.3 L2.3 0 L4 4 L5.7 0 L8 0.3 L5.5 6.5 L8 12.7 L5.7 13 L4 9 L2.3 13 L0 12.7 L2.5 6.5 Z" fill="#FF0000" stroke="#FF0000" stroke-width="0.5" /></svg><span id="t12" class="t " style="left:66px;top:232px;letter-spacing:0.015px;">Use case: TestObjective4 (3)</span><div class="a" style="left:18px;top:256px;width:17px;height:1px;background:repeating-linear-gradient(to right,#000 0,#000 1px,transparent 1px,transparent 2px)"></div><div class="a" style="left:35px;top:250px;width:13px;height:13px;box-sizing:border-box;border:1px solid #000;background:#fff"></div><div style="position:absolute;left:38px;top:256px;width:7px;height:1px;background:#000;"></div><svg class="" style="left:51px;top:253px" width="15" height="9" viewBox="0 0 15 9"><rect x="0.6" y="0.6" width="13.8" height="7.8" rx="4" ry="3.9" fill="#A9C6E0" stroke="#4A8AD0" stroke-width="1" stroke-dasharray="2.2 1.1"/></svg><svg class="" style="left:53.5px;top:250px" width="13" height="14" viewBox="0 0 13 14"><path d="M0 6.5 L2.6 5 L4.3 8.6 L10.6 0.3 L12 0 L5.2 13.6 L3.4 13.6 Z" fill="#000" stroke="#000" stroke-width="0.6" /></svg><span id="t13" class="t " style="left:66px;top:250px;letter-spacing:0.015px;">Use case: TestObjective1 (2)</span><div class="a" style="left:43px;top:148px;width:19px;height:1px;background:repeating-linear-gradient(to right,#000 0,#000 1px,transparent 1px,transparent 2px)"></div><svg class="ce" style="left:76px;top:143px" width="15" height="14" viewBox="0 0 15 14"><rect x="0" y="0" width="15" height="14" fill="#000"/><rect x="1" y="1" width="13" height="12" fill="#B8E0F0"/><rect x="1" y="1" width="13" height="1" fill="#D8F0F8"/><rect x="4" y="2" width="1" height="11" fill="#88B8D8"/><rect x="6" y="2" width="1" height="11" fill="#88B8D8"/><rect x="2" y="2" width="11" height="1" fill="#88B8D8"/><rect x="8" y="7" width="1" height="5" fill="#6090C0"/><rect x="12" y="7" width="1" height="5" fill="#6090C0"/><rect x="8" y="8" width="5" height="1" fill="#0040E0"/><rect x="8" y="10" width="5" height="1" fill="#0040E0"/></svg><div style="position:absolute;left:79px;top:147px;width:13px;height:3px;background:#000080;"></div><span id="t14" class="t " style="left:92px;top:142px;letter-spacing:-0.222px;">Test_case4</span><div class="a" style="left:43px;top:166px;width:19px;height:1px;background:repeating-linear-gradient(to right,#000 0,#000 1px,transparent 1px,transparent 2px)"></div><svg class="ce" style="left:76px;top:161px" width="15" height="14" viewBox="0 0 15 14"><rect x="0" y="0" width="15" height="14" fill="#0000A0"/><rect x="1" y="1" width="13" height="12" fill="#B8E0F0"/><rect x="1" y="1" width="13" height="1" fill="#D8F0F8"/><rect x="4" y="2" width="1" height="11" fill="#88B8D8"/><rect x="6" y="2" width="1" height="11" fill="#88B8D8"/><rect x="2" y="2" width="11" height="1" fill="#88B8D8"/><rect x="8" y="7" width="1" height="5" fill="#6090C0"/><rect x="12" y="7" width="1" height="5" fill="#6090C0"/><rect x="8" y="8" width="5" height="1" fill="#0040E0"/><rect x="8" y="10" width="5" height="1" fill="#0040E0"/></svg><svg class="" style="left:79px;top:159.3px" width="13" height="14" viewBox="0 0 13 14"><path d="M0 6.5 L2.6 5 L4.3 8.6 L10.6 0.3 L12 0 L5.2 13.6 L3.4 13.6 Z" fill="#000" stroke="#000" stroke-width="0.6" /></svg><span id="t15" class="t " style="left:92px;top:160px;letter-spacing:-0.111px;">Test_case5</span><div class="a" style="left:43px;top:184px;width:19px;height:1px;background:repeating-linear-gradient(to right,#000 0,#000 1px,transparent 1px,transparent 2px)"></div><svg class="ce" style="left:76px;top:179px" width="15" height="14" viewBox="0 0 15 14"><rect x="0" y="0" width="15" height="14" fill="#0000A0"/><rect x="1" y="1" width="13" height="12" fill="#B8E0F0"/><rect x="1" y="1" width="13" height="1" fill="#D8F0F8"/><rect x="4" y="2" width="1" height="11" fill="#88B8D8"/><rect x="6" y="2" width="1" height="11" fill="#88B8D8"/><rect x="2" y="2" width="11" height="1" fill="#88B8D8"/><rect x="8" y="7" width="1" height="5" fill="#6090C0"/><rect x="12" y="7" width="1" height="5" fill="#6090C0"/><rect x="8" y="8" width="5" height="1" fill="#0040E0"/><rect x="8" y="10" width="5" height="1" fill="#0040E0"/></svg><svg class="" style="left:79px;top:177.3px" width="13" height="14" viewBox="0 0 13 14"><path d="M0 6.5 L2.6 5 L4.3 8.6 L10.6 0.3 L12 0 L5.2 13.6 L3.4 13.6 Z" fill="#000" stroke="#000" stroke-width="0.6" /></svg><span id="t16" class="t " style="left:92px;top:178px;letter-spacing:-0.111px;">Test_case6</span><div class="a" style="left:43px;top:202px;width:19px;height:1px;background:repeating-linear-gradient(to right,#000 0,#000 1px,transparent 1px,transparent 2px)"></div><svg class="ce" style="left:76px;top:197px" width="15" height="14" viewBox="0 0 15 14"><rect x="0" y="0" width="15" height="14" fill="#0000A0"/><rect x="1" y="1" width="13" height="12" fill="#B8E0F0"/><rect x="1" y="1" width="13" height="1" fill="#D8F0F8"/><rect x="4" y="2" width="1" height="11" fill="#88B8D8"/><rect x="6" y="2" width="1" height="11" fill="#88B8D8"/><rect x="2" y="2" width="11" height="1" fill="#88B8D8"/><rect x="8" y="7" width="1" height="5" fill="#6090C0"/><rect x="12" y="7" width="1" height="5" fill="#6090C0"/><rect x="8" y="8" width="5" height="1" fill="#0040E0"/><rect x="8" y="10" width="5" height="1" fill="#0040E0"/></svg><svg class="" style="left:79px;top:195.3px" width="13" height="14" viewBox="0 0 13 14"><path d="M0 6.5 L2.6 5 L4.3 8.6 L10.6 0.3 L12 0 L5.2 13.6 L3.4 13.6 Z" fill="#000" stroke="#000" stroke-width="0.6" /></svg><span id="t17" class="t " style="left:92px;top:196px;letter-spacing:-0.111px;">Test_case7</span><div class="a" style="left:43px;top:220px;width:19px;height:1px;background:repeating-linear-gradient(to right,#000 0,#000 1px,transparent 1px,transparent 2px)"></div><svg class="ce" style="left:76px;top:215px" width="15" height="14" viewBox="0 0 15 14"><rect x="0" y="0" width="15" height="14" fill="#000"/><rect x="1" y="1" width="13" height="12" fill="#B8E0F0"/><rect x="1" y="1" width="13" height="1" fill="#D8F0F8"/><rect x="4" y="2" width="1" height="11" fill="#88B8D8"/><rect x="6" y="2" width="1" height="11" fill="#88B8D8"/><rect x="2" y="2" width="11" height="1" fill="#88B8D8"/><rect x="8" y="7" width="1" height="5" fill="#6090C0"/><rect x="12" y="7" width="1" height="5" fill="#6090C0"/><rect x="8" y="8" width="5" height="1" fill="#0040E0"/><rect x="8" y="10" width="5" height="1" fill="#0040E0"/></svg><div style="position:absolute;left:79px;top:219px;width:13px;height:3px;background:#000080;"></div><span id="t18" class="t " style="left:92px;top:214px;letter-spacing:-0.111px;">Test_case8</span><div class="a" style="left:43px;top:274px;width:19px;height:1px;background:repeating-linear-gradient(to right,#000 0,#000 1px,transparent 1px,transparent 2px)"></div><svg class="ce" style="left:76px;top:269px" width="15" height="14" viewBox="0 0 15 14"><rect x="0" y="0" width="15" height="14" fill="#0000A0"/><rect x="1" y="1" width="13" height="12" fill="#B8E0F0"/><rect x="1" y="1" width="13" height="1" fill="#D8F0F8"/><rect x="4" y="2" width="1" height="11" fill="#88B8D8"/><rect x="6" y="2" width="1" height="11" fill="#88B8D8"/><rect x="2" y="2" width="11" height="1" fill="#88B8D8"/><rect x="8" y="7" width="1" height="5" fill="#6090C0"/><rect x="12" y="7" width="1" height="5" fill="#6090C0"/><rect x="8" y="8" width="5" height="1" fill="#0040E0"/><rect x="8" y="10" width="5" height="1" fill="#0040E0"/></svg><svg class="" style="left:79px;top:267.3px" width="13" height="14" viewBox="0 0 13 14"><path d="M0 6.5 L2.6 5 L4.3 8.6 L10.6 0.3 L12 0 L5.2 13.6 L3.4 13.6 Z" fill="#000" stroke="#000" stroke-width="0.6" /></svg><span id="t19" class="t " style="left:92px;top:268px;letter-spacing:-0.111px;">Test_case2</span><div class="a" style="left:43px;top:292px;width:19px;height:1px;background:repeating-linear-gradient(to right,#000 0,#000 1px,transparent 1px,transparent 2px)"></div><svg class="ce" style="left:76px;top:287px" width="15" height="14" viewBox="0 0 15 14"><rect x="0" y="0" width="15" height="14" fill="#0000A0"/><rect x="1" y="1" width="13" height="12" fill="#B8E0F0"/><rect x="1" y="1" width="13" height="1" fill="#D8F0F8"/><rect x="4" y="2" width="1" height="11" fill="#88B8D8"/><rect x="6" y="2" width="1" height="11" fill="#88B8D8"/><rect x="2" y="2" width="11" height="1" fill="#88B8D8"/><rect x="8" y="7" width="1" height="5" fill="#6090C0"/><rect x="12" y="7" width="1" height="5" fill="#6090C0"/><rect x="8" y="8" width="5" height="1" fill="#0040E0"/><rect x="8" y="10" width="5" height="1" fill="#0040E0"/></svg><svg class="" style="left:79px;top:285.3px" width="13" height="14" viewBox="0 0 13 14"><path d="M0 6.5 L2.6 5 L4.3 8.6 L10.6 0.3 L12 0 L5.2 13.6 L3.4 13.6 Z" fill="#000" stroke="#000" stroke-width="0.6" /></svg><span id="t20" class="t " style="left:92px;top:286px;letter-spacing:-0.111px;">Test_case1</span><div class="a" style="left:18px;top:310px;width:17px;height:1px;background:repeating-linear-gradient(to right,#000 0,#000 1px,transparent 1px,transparent 2px)"></div><div class="a" style="left:35px;top:304px;width:13px;height:13px;box-sizing:border-box;border:1px solid #000;background:#fff"></div><div style="position:absolute;left:38px;top:310px;width:7px;height:1px;background:#000;"></div></div></div><div class="sbv" style="left:1003px;top:78px;height:228px"></div><div class="sbtn" style="left:1004px;top:78px;width:15px;height:16px"><svg class="" style="left:0px;top:0px" width="13" height="14" viewBox="0 0 13 14"><path d="M2.5 8.5 L6.5 4.5 L10.5 8.5" fill="none" stroke="#4D6185" stroke-width="2.3" /></svg></div><div class="sbtn" style="left:1004px;top:289px;width:15px;height:16px"><svg class="" style="left:0px;top:0px" width="13" height="14" viewBox="0 0 13 14"><path d="M2.5 5 L6.5 9 L10.5 5" fill="none" stroke="#4D6185" stroke-width="2.3" /></svg></div><div class="sthv" style="left:1004px;top:95px;height:167px"><div class="a" style="left:0;top:78.5px"><div style="position:absolute;left:3px;top:0px;width:6px;height:1px;background:#EEF4FE;"></div><div style="position:absolute;left:4px;top:1px;width:6px;height:1px;background:#8CB0F8;"></div><div style="position:absolute;left:3px;top:2px;width:6px;height:1px;background:#EEF4FE;"></div><div style="position:absolute;left:4px;top:3px;width:6px;height:1px;background:#8CB0F8;"></div><div style="position:absolute;left:3px;top:4px;width:6px;height:1px;background:#EEF4FE;"></div><div style="position:absolute;left:4px;top:5px;width:6px;height:1px;background:#8CB0F8;"></div><div style="position:absolute;left:3px;top:6px;width:6px;height:1px;background:#EEF4FE;"></div><div style="position:absolute;left:4px;top:7px;width:6px;height:1px;background:#8CB0F8;"></div></div></div><div class="sbh" style="left:4px;top:306px;width:999px"></div><div class="sbtn" style="left:4px;top:307px;width:16px;height:15px"><svg class="" style="left:0px;top:0px" width="14" height="13" viewBox="0 0 14 13"><path d="M8.5 2.5 L4.5 6.5 L8.5 10.5" fill="none" stroke="#4D6185" stroke-width="2.3" /></svg></div><div class="sbtn" style="left:986px;top:307px;width:16px;height:15px"><svg class="" style="left:0px;top:0px" width="14" height="13" viewBox="0 0 14 13"><path d="M5.5 2.5 L9.5 6.5 L5.5 10.5" fill="none" stroke="#4D6185" stroke-width="2.3" /></svg></div><div class="sthh" style="left:252px;top:307px;width:181px"><div class="a" style="top:0;left:85.5px"><div style="position:absolute;left:0px;top:3px;width:1px;height:6px;background:#EEF4FE;"></div><div style="position:absolute;left:1px;top:4px;width:1px;height:6px;background:#8CB0F8;"></div><div style="position:absolute;left:2px;top:3px;width:1px;height:6px;background:#EEF4FE;"></div><div style="position:absolute;left:3px;top:4px;width:1px;height:6px;background:#8CB0F8;"></div><div style="position:absolute;left:4px;top:3px;width:1px;height:6px;background:#EEF4FE;"></div><div style="position:absolute;left:5px;top:4px;width:1px;height:6px;background:#8CB0F8;"></div><div style="position:absolute;left:6px;top:3px;width:1px;height:6px;background:#EEF4FE;"></div><div style="position:absolute;left:7px;top:4px;width:1px;height:6px;background:#8CB0F8;"></div></div></div><div class="tab" style="left:66px;top:328px;width:58px;height:19px"></div><div class="tab" style="left:125px;top:328px;width:44px;height:19px"></div><div class="a" style="left:4px;top:346px;width:1014px;height:224px;box-sizing:border-box;background:#FCFCFE;border:1px solid #919B9C;border-left:none;"></div><div class="tabsel" style="left:4px;top:326px;width:62px;height:22px"><div style="height:3px;border-radius:3px 3px 0 0;background:linear-gradient(to bottom,#E68B2C 0,#FFC73C 100%);margin:0 -1px"></div></div><span id="t21" class="t " style="left:12px;top:329px;letter-spacing:-0.071px;">Overview</span><span id="t22" class="t " style="left:69px;top:331px;letter-spacing:-0.136px;">Multiplicity</span><span id="t23" class="t " style="left:129.5px;top:331px;letter-spacing:-0.083px;">Metrics</span><div style="position:absolute;left:8px;top:348px;width:991px;height:203px;background:#C0C0C0;"></div><div class="a" style="left:0;top:348px;width:999px;height:203px;overflow:hidden;"><div class="a" style="left:0;top:-348px"><div style="position:absolute;left:241px;top:348px;width:1px;height:203px;background:#E4E4E4;"></div><div style="position:absolute;left:254px;top:348px;width:1px;height:203px;background:#E4E4E4;"></div><div style="position:absolute;left:268px;top:348px;width:1px;height:203px;background:#E4E4E4;"></div><div style="position:absolute;left:281px;top:348px;width:1px;height:203px;background:#E4E4E4;"></div><div style="position:absolute;left:294px;top:348px;width:1px;height:203px;background:#E4E4E4;"></div><div style="position:absolute;left:307px;top:348px;width:1px;height:203px;background:#E4E4E4;"></div><div style="position:absolute;left:320px;top:348px;width:1px;height:203px;background:#E4E4E4;"></div><div style="position:absolute;left:334px;top:348px;width:1px;height:203px;background:#E4E4E4;"></div><div style="position:absolute;left:347px;top:348px;width:1px;height:203px;background:#7F7F7F;"></div><div style="position:absolute;left:360px;top:348px;width:1px;height:203px;background:#E4E4E4;"></div><div style="position:absolute;left:373px;top:348px;width:1px;height:203px;background:#E4E4E4;"></div><div style="position:absolute;left:386px;top:348px;width:1px;height:203px;background:#E4E4E4;"></div><div style="position:absolute;left:400px;top:348px;width:1px;height:203px;background:#E4E4E4;"></div><div style="position:absolute;left:413px;top:348px;width:1px;height:203px;background:#E4E4E4;"></div><div style="position:absolute;left:426px;top:348px;width:1px;height:203px;background:#E4E4E4;"></div><div style="position:absolute;left:439px;top:348px;width:1px;height:203px;background:#E4E4E4;"></div><div style="position:absolute;left:452px;top:348px;width:1px;height:203px;background:#E4E4E4;"></div><div style="position:absolute;left:466px;top:348px;width:1px;height:203px;background:#E4E4E4;"></div><div style="position:absolute;left:479px;top:348px;width:1px;height:203px;background:#7F7F7F;"></div><div style="position:absolute;left:492px;top:348px;width:1px;height:203px;background:#E4E4E4;"></div><div style="position:absolute;left:505px;top:348px;width:1px;height:203px;background:#E4E4E4;"></div><div style="position:absolute;left:518px;top:348px;width:1px;height:203px;background:#E4E4E4;"></div><div style="position:absolute;left:532px;top:348px;width:1px;height:203px;background:#E4E4E4;"></div><div style="position:absolute;left:545px;top:348px;width:1px;height:203px;background:#E4E4E4;"></div><div style="position:absolute;left:558px;top:348px;width:1px;height:203px;background:#E4E4E4;"></div><div style="position:absolute;left:571px;top:348px;width:1px;height:203px;background:#E4E4E4;"></div><div style="position:absolute;left:584px;top:348px;width:1px;height:203px;background:#E4E4E4;"></div><div style="position:absolute;left:598px;top:348px;width:1px;height:203px;background:#E4E4E4;"></div><div style="position:absolute;left:611px;top:348px;width:1px;height:203px;background:#7F7F7F;"></div><div style="position:absolute;left:624px;top:348px;width:1px;height:203px;background:#E4E4E4;"></div><div style="position:absolute;left:637px;top:348px;width:1px;height:203px;background:#E4E4E4;"></div><div style="position:absolute;left:650px;top:348px;width:1px;height:203px;background:#E4E4E4;"></div><div style="position:absolute;left:664px;top:348px;width:1px;height:203px;background:#E4E4E4;"></div><div style="position:absolute;left:677px;top:348px;width:1px;height:203px;background:#E4E4E4;"></div><div style="position:absolute;left:690px;top:348px;width:1px;height:203px;background:#E4E4E4;"></div><div style="position:absolute;left:703px;top:348px;width:1px;height:203px;background:#E4E4E4;"></div><div style="position:absolute;left:716px;top:348px;width:1px;height:203px;background:#E4E4E4;"></div><div style="position:absolute;left:730px;top:348px;width:1px;height:203px;background:#E4E4E4;"></div><div style="position:absolute;left:743px;top:348px;width:1px;height:203px;background:#7F7F7F;"></div><div style="position:absolute;left:756px;top:348px;width:1px;height:203px;background:#E4E4E4;"></div><div style="position:absolute;left:769px;top:348px;width:1px;height:203px;background:#E4E4E4;"></div><div style="position:absolute;left:782px;top:348px;width:1px;height:203px;background:#E4E4E4;"></div><div style="position:absolute;left:796px;top:348px;width:1px;height:203px;background:#E4E4E4;"></div><div style="position:absolute;left:809px;top:348px;width:1px;height:203px;background:#E4E4E4;"></div><div style="position:absolute;left:822px;top:348px;width:1px;height:203px;background:#E4E4E4;"></div><div style="position:absolute;left:835px;top:348px;width:1px;height:203px;background:#E4E4E4;"></div><div style="position:absolute;left:848px;top:348px;width:1px;height:203px;background:#E4E4E4;"></div><div style="position:absolute;left:862px;top:348px;width:1px;height:203px;background:#E4E4E4;"></div><div style="position:absolute;left:875px;top:348px;width:1px;height:203px;background:#7F7F7F;"></div><div style="position:absolute;left:888px;top:348px;width:1px;height:203px;background:#E4E4E4;"></div><div style="position:absolute;left:901px;top:348px;width:1px;height:203px;background:#E4E4E4;"></div><div style="position:absolute;left:914px;top:348px;width:1px;height:203px;background:#E4E4E4;"></div><div style="position:absolute;left:928px;top:348px;width:1px;height:203px;background:#E4E4E4;"></div><div style="position:absolute;left:941px;top:348px;width:1px;height:203px;background:#E4E4E4;"></div><div style="position:absolute;left:954px;top:348px;width:1px;height:203px;background:#E4E4E4;"></div><div style="position:absolute;left:967px;top:348px;width:1px;height:203px;background:#E4E4E4;"></div><div style="position:absolute;left:980px;top:348px;width:1px;height:203px;background:#E4E4E4;"></div><div style="position:absolute;left:994px;top:348px;width:1px;height:203px;background:#E4E4E4;"></div><div style="position:absolute;left:227px;top:348px;width:1px;height:203px;background:#000;"></div><div style="position:absolute;left:228px;top:355px;width:771px;height:2px;background:#000;"></div><div style="position:absolute;left:228px;top:373px;width:771px;height:2px;background:#000;"></div><div style="position:absolute;left:228px;top:481px;width:771px;height:2px;background:#000;"></div><div style="position:absolute;left:334px;top:499px;width:665px;height:2px;background:#000;"></div><svg class="" style="left:334px;top:500px" width="4" height="8" viewBox="0 0 4 8"><path d="M0 0 H4 L0 8 Z" fill="#000" stroke="none" stroke-width="1" /></svg><div style="position:absolute;left:386px;top:348px;width:2px;height:203px;background:#107810;"></div><div style="position:absolute;left:624px;top:348px;width:2px;height:203px;background:#107810;"></div><div class="a" style="left:558px;top:406px;width:106px;height:10px;box-sizing:border-box;border:1px solid #000;background:#7396DB"></div><div class="a" style="left:227px;top:424px;width:27px;height:10px;box-sizing:border-box;border:1px solid #000;background:#ADADAD"></div><div class="a" style="left:254px;top:424px;width:40px;height:10px;box-sizing:border-box;border:1px solid #000;background:#ADADAD"></div><div class="a" style="left:294px;top:424px;width:66px;height:10px;box-sizing:border-box;border:1px solid #000;background:#ADADAD"></div><div class="a" style="left:360px;top:424px;width:92px;height:10px;box-sizing:border-box;border:1px solid #000;background:#ADADAD"></div><div class="a" style="left:452px;top:424px;width:93px;height:10px;box-sizing:border-box;border:1px solid #000;background:#ADADAD"></div><div class="a" style="left:545px;top:424px;width:105px;height:10px;box-sizing:border-box;border:1px solid #000;background:#ADADAD"></div><div class="a" style="left:650px;top:424px;width:106px;height:10px;box-sizing:border-box;border:1px solid #000;background:#ADADAD"></div><div class="a" style="left:756px;top:424px;width:119px;height:10px;box-sizing:border-box;border:1px solid #000;background:#ADADAD"></div><div class="a" style="left:875px;top:424px;width:119px;height:10px;box-sizing:border-box;border:1px solid #000;background:#ADADAD"></div><div class="a" style="left:994px;top:424px;width:16px;height:10px;box-sizing:border-box;border:1px solid #000;background:#ADADAD"></div><div class="a" style="left:227px;top:442px;width:14px;height:10px;box-sizing:border-box;border:1px solid #000;background:#7396DB"></div><div class="a" style="left:241px;top:442px;width:13px;height:10px;box-sizing:border-box;border:1px solid #000;background:#7396DB"></div><div class="a" style="left:254px;top:442px;width:27px;height:10px;box-sizing:border-box;border:1px solid #000;background:#7396DB"></div><div class="a" style="left:281px;top:442px;width:13px;height:10px;box-sizing:border-box;border:1px solid #000;background:#7396DB"></div><div class="a" style="left:294px;top:442px;width:26px;height:10px;box-sizing:border-box;border:1px solid #000;background:#7396DB"></div><div class="a" style="left:320px;top:442px;width:40px;height:10px;box-sizing:border-box;border:1px solid #000;background:#7396DB"></div><div class="a" style="left:360px;top:442px;width:53px;height:10px;box-sizing:border-box;border:1px solid #000;background:#7396DB"></div><div class="a" style="left:413px;top:442px;width:39px;height:10px;box-sizing:border-box;border:1px solid #000;background:#7396DB"></div><div class="a" style="left:452px;top:442px;width:53px;height:10px;box-sizing:border-box;border:1px solid #000;background:#7396DB"></div><div class="a" style="left:505px;top:442px;width:40px;height:10px;box-sizing:border-box;border:1px solid #000;background:#7396DB"></div><div class="a" style="left:545px;top:442px;width:66px;height:10px;box-sizing:border-box;border:1px solid #000;background:#7396DB"></div><div class="a" style="left:611px;top:442px;width:39px;height:10px;box-sizing:border-box;border:1px solid #000;background:#7396DB"></div><div class="a" style="left:650px;top:442px;width:66px;height:10px;box-sizing:border-box;border:1px solid #000;background:#7396DB"></div><div class="a" style="left:716px;top:442px;width:40px;height:10px;box-sizing:border-box;border:1px solid #000;background:#7396DB"></div><div class="a" style="left:756px;top:442px;width:79px;height:10px;box-sizing:border-box;border:1px solid #000;background:#ADADAD"></div><div class="a" style="left:835px;top:442px;width:40px;height:10px;box-sizing:border-box;border:1px solid #000;background:#7396DB"></div><div class="a" style="left:875px;top:442px;width:79px;height:10px;box-sizing:border-box;border:1px solid #000;background:#ADADAD"></div><div class="a" style="left:954px;top:442px;width:40px;height:10px;box-sizing:border-box;border:1px solid #000;background:#7396DB"></div><div class="a" style="left:994px;top:442px;width:16px;height:10px;box-sizing:border-box;border:1px solid #000;background:#7396DB"></div><div class="a" style="left:334px;top:514px;width:13px;height:10px;box-sizing:border-box;border:1px solid #000;background:#FF2400"></div><div class="a" style="left:347px;top:514px;width:26px;height:10px;box-sizing:border-box;border:1px solid #000;background:#7396DB"></div><div class="a" style="left:334px;top:532px;width:39px;height:10px;box-sizing:border-box;border:1px solid #000;background:#7396DB"></div><div class="a" style="left:373px;top:532px;width:27px;height:10px;box-sizing:border-box;border:1px solid #000;background:#7396DB"></div><div class="a" style="left:426px;top:514px;width:13px;height:10px;box-sizing:border-box;border:1px solid #000;background:#FF2400"></div><div class="a" style="left:439px;top:514px;width:27px;height:10px;box-sizing:border-box;border:1px solid #000;background:#7396DB"></div><div class="a" style="left:426px;top:532px;width:40px;height:10px;box-sizing:border-box;border:1px solid #000;background:#7396DB"></div><div class="a" style="left:466px;top:532px;width:26px;height:10px;box-sizing:border-box;border:1px solid #000;background:#7396DB"></div><div class="a" style="left:518px;top:514px;width:14px;height:10px;box-sizing:border-box;border:1px solid #000;background:#FF2400"></div><div class="a" style="left:532px;top:514px;width:39px;height:10px;box-sizing:border-box;border:1px solid #000;background:#7396DB"></div><div class="a" style="left:518px;top:532px;width:53px;height:10px;box-sizing:border-box;border:1px solid #000;background:#7396DB"></div><div class="a" style="left:571px;top:532px;width:27px;height:10px;box-sizing:border-box;border:1px solid #000;background:#7396DB"></div><div class="a" style="left:624px;top:514px;width:13px;height:10px;box-sizing:border-box;border:1px solid #000;background:#FF2400"></div><div class="a" style="left:637px;top:514px;width:40px;height:10px;box-sizing:border-box;border:1px solid #000;background:#7396DB"></div><div class="a" style="left:624px;top:532px;width:53px;height:10px;box-sizing:border-box;border:1px solid #000;background:#7396DB"></div><div class="a" style="left:677px;top:532px;width:26px;height:10px;box-sizing:border-box;border:1px solid #000;background:#7396DB"></div><div class="a" style="left:730px;top:514px;width:13px;height:10px;box-sizing:border-box;border:1px solid #000;background:#FF2400"></div><div class="a" style="left:743px;top:514px;width:53px;height:10px;box-sizing:border-box;border:1px solid #000;background:#7396DB"></div><div class="a" style="left:730px;top:532px;width:66px;height:10px;box-sizing:border-box;border:1px solid #000;background:#7396DB"></div><div class="a" style="left:796px;top:532px;width:26px;height:10px;box-sizing:border-box;border:1px solid #000;background:#7396DB"></div><div class="a" style="left:848px;top:514px;width:14px;height:10px;box-sizing:border-box;border:1px solid #000;background:#FF2400"></div><div class="a" style="left:862px;top:514px;width:52px;height:10px;box-sizing:border-box;border:1px solid #000;background:#7396DB"></div><div class="a" style="left:848px;top:532px;width:66px;height:10px;box-sizing:border-box;border:1px solid #000;background:#7396DB"></div><div class="a" style="left:914px;top:532px;width:27px;height:10px;box-sizing:border-box;border:1px solid #000;background:#7396DB"></div><div class="a" style="left:967px;top:514px;width:13px;height:10px;box-sizing:border-box;border:1px solid #000;background:#FF2400"></div><div class="a" style="left:980px;top:514px;width:30px;height:10px;box-sizing:border-box;border:1px solid #000;background:#7396DB"></div><div class="a" style="left:967px;top:532px;width:43px;height:10px;box-sizing:border-box;border:1px solid #000;background:#7396DB"></div><div style="position:absolute;left:386px;top:348px;width:2px;height:203px;background:#107810;"></div><div style="position:absolute;left:624px;top:348px;width:2px;height:203px;background:#107810;"></div></div></div><div class="a" style="left:8px;top:348px;width:219px;height:203px;overflow:hidden;"><div class="a" style="left:-8px;top:-348px;"><div class="a" style="left:9px;top:357px;width:5px;height:1px;background:repeating-linear-gradient(to right,#000 0,#000 1px,transparent 1px,transparent 2px)"></div><div class="a" style="left:20px;top:365px;width:1px;height:200px;background:repeating-linear-gradient(to bottom,#000 0,#000 1px,transparent 1px,transparent 2px)"></div><div class="a" style="left:45px;top:383px;width:1px;height:83px;background:repeating-linear-gradient(to bottom,#000 0,#000 1px,transparent 1px,transparent 2px)"></div><div class="a" style="left:45px;top:509px;width:1px;height:29px;background:repeating-linear-gradient(to bottom,#000 0,#000 1px,transparent 1px,transparent 2px)"></div><div class="a" style="left:14px;top:351px;width:13px;height:13px;box-sizing:border-box;border:1px solid #000;background:#C0C0C0"></div><div style="position:absolute;left:17px;top:357px;width:7px;height:1px;background:#000;"></div><svg class="ce" style="left:30px;top:352px" width="14" height="13" viewBox="0 0 14 13"><path d="M0.5 12.5 V0.5 H7.5 V2.5 H13.5 V12.5 Z" fill="#D4E8F4" stroke="#000" stroke-width="1" /><rect x="0" y="2" width="8" height="1" fill="#000"/><rect x="1" y="1" width="6" height="1" fill="#E8E8E8"/><rect x="1" y="3" width="10" height="9" fill="#CCE4F6"/><rect x="11" y="3" width="2" height="9" fill="#E0F6FF"/><rect x="1.5" y="4.5" width="3" height="2" fill="#D8ECF8" stroke="#4A8ABE"/><rect x="1.5" y="8.5" width="3" height="2" fill="#D8ECF8" stroke="#4A8ABE"/><rect x="6.5" y="4.5" width="3" height="2" fill="#D8ECF8" stroke="#4A8ABE"/><rect x="6.5" y="8.5" width="3" height="2" fill="#D8ECF8" stroke="#4A8ABE"/></svg><span id="t24" class="t " style="left:46px;top:351px;letter-spacing:-0.189px;">Test cases</span><div class="a" style="left:22px;top:375px;width:17px;height:1px;background:repeating-linear-gradient(to right,#000 0,#000 1px,transparent 1px,transparent 2px)"></div><div class="a" style="left:39px;top:369px;width:13px;height:13px;box-sizing:border-box;border:1px solid #000;background:#C0C0C0"></div><div style="position:absolute;left:42px;top:375px;width:7px;height:1px;background:#000;"></div><svg class="" style="left:55px;top:372px" width="15" height="9" viewBox="0 0 15 9"><rect x="0.6" y="0.6" width="13.8" height="7.8" rx="4" ry="3.9" fill="#A9C6E0" stroke="#4A8AD0" stroke-width="1" stroke-dasharray="2.2 1.1"/></svg><span id="t25" class="t " style="left:70px;top:369px;letter-spacing:0.015px;">Use case: TestObjective3 (5)</span><div class="a" style="left:22px;top:483px;width:17px;height:1px;background:repeating-linear-gradient(to right,#000 0,#000 1px,transparent 1px,transparent 2px)"></div><div class="a" style="left:39px;top:477px;width:13px;height:13px;box-sizing:border-box;border:1px solid #000;background:#C0C0C0"></div><div style="position:absolute;left:42px;top:483px;width:7px;height:1px;background:#000;"></div><div style="position:absolute;left:45px;top:480px;width:1px;height:7px;background:#000;"></div><svg class="" style="left:55px;top:480px" width="15" height="9" viewBox="0 0 15 9"><rect x="0.6" y="0.6" width="13.8" height="7.8" rx="4" ry="3.9" fill="#A9C6E0" stroke="#4A8AD0" stroke-width="1" stroke-dasharray="2.2 1.1"/></svg><span id="t26" class="t " style="left:70px;top:477px;letter-spacing:0.015px;">Use case: TestObjective4 (3)</span><div class="a" style="left:22px;top:501px;width:17px;height:1px;background:repeating-linear-gradient(to right,#000 0,#000 1px,transparent 1px,transparent 2px)"></div><div class="a" style="left:39px;top:495px;width:13px;height:13px;box-sizing:border-box;border:1px solid #000;background:#C0C0C0"></div><div style="position:absolute;left:42px;top:501px;width:7px;height:1px;background:#000;"></div><svg class="" style="left:55px;top:498px" width="15" height="9" viewBox="0 0 15 9"><rect x="0.6" y="0.6" width="13.8" height="7.8" rx="4" ry="3.9" fill="#A9C6E0" stroke="#4A8AD0" stroke-width="1" stroke-dasharray="2.2 1.1"/></svg><span id="t27" class="t " style="left:70px;top:495px;letter-spacing:0.015px;">Use case: TestObjective1 (2)</span><div class="a" style="left:47px;top:393px;width:19px;height:1px;background:repeating-linear-gradient(to right,#000 0,#000 1px,transparent 1px,transparent 2px)"></div><svg class="ce" style="left:80px;top:388px" width="15" height="14" viewBox="0 0 15 14"><rect x="0" y="0" width="15" height="14" fill="#000"/><rect x="1" y="1" width="13" height="12" fill="#B4E4F4"/><rect x="4" y="2" width="1" height="10" fill="#78A8D8"/><rect x="8" y="2" width="1" height="10" fill="#78A8D8"/><rect x="12" y="2" width="1" height="10" fill="#78A8D8"/><rect x="3" y="2" width="11" height="1" fill="#98C8E8"/><rect x="1" y="1" width="2" height="1" fill="#000"/><rect x="4" y="5" width="5" height="1" fill="#000"/><rect x="8" y="7" width="5" height="1" fill="#000"/><rect x="8" y="9" width="5" height="1" fill="#000"/></svg><span id="t28" class="t " style="left:96px;top:387px;letter-spacing:-0.222px;">Test_case4</span><div class="a" style="left:47px;top:411px;width:19px;height:1px;background:repeating-linear-gradient(to right,#000 0,#000 1px,transparent 1px,transparent 2px)"></div><svg class="ce" style="left:80px;top:406px" width="15" height="14" viewBox="0 0 15 14"><rect x="0" y="0" width="15" height="14" fill="#000"/><rect x="1" y="1" width="13" height="12" fill="#B4E4F4"/><rect x="4" y="2" width="1" height="10" fill="#78A8D8"/><rect x="8" y="2" width="1" height="10" fill="#78A8D8"/><rect x="12" y="2" width="1" height="10" fill="#78A8D8"/><rect x="3" y="2" width="11" height="1" fill="#98C8E8"/><rect x="1" y="1" width="2" height="1" fill="#000"/><rect x="4" y="5" width="5" height="1" fill="#000"/><rect x="8" y="7" width="5" height="1" fill="#000"/><rect x="8" y="9" width="5" height="1" fill="#000"/></svg><span id="t29" class="t " style="left:96px;top:405px;letter-spacing:-0.111px;">Test_case5</span><div class="a" style="left:47px;top:429px;width:19px;height:1px;background:repeating-linear-gradient(to right,#000 0,#000 1px,transparent 1px,transparent 2px)"></div><svg class="ce" style="left:80px;top:424px" width="15" height="14" viewBox="0 0 15 14"><rect x="0" y="0" width="15" height="14" fill="#000"/><rect x="1" y="1" width="13" height="12" fill="#B4E4F4"/><rect x="4" y="2" width="1" height="10" fill="#78A8D8"/><rect x="8" y="2" width="1" height="10" fill="#78A8D8"/><rect x="12" y="2" width="1" height="10" fill="#78A8D8"/><rect x="3" y="2" width="11" height="1" fill="#98C8E8"/><rect x="1" y="1" width="2" height="1" fill="#000"/><rect x="4" y="5" width="5" height="1" fill="#000"/><rect x="8" y="7" width="5" height="1" fill="#000"/><rect x="8" y="9" width="5" height="1" fill="#000"/></svg><span id="t30" class="t " style="left:96px;top:423px;letter-spacing:-0.111px;">Test_case6</span><div class="a" style="left:47px;top:447px;width:19px;height:1px;background:repeating-linear-gradient(to right,#000 0,#000 1px,transparent 1px,transparent 2px)"></div><svg class="ce" style="left:80px;top:442px" width="15" height="14" viewBox="0 0 15 14"><rect x="0" y="0" width="15" height="14" fill="#000"/><rect x="1" y="1" width="13" height="12" fill="#B4E4F4"/><rect x="4" y="2" width="1" height="10" fill="#78A8D8"/><rect x="8" y="2" width="1" height="10" fill="#78A8D8"/><rect x="12" y="2" width="1" height="10" fill="#78A8D8"/><rect x="3" y="2" width="11" height="1" fill="#98C8E8"/><rect x="1" y="1" width="2" height="1" fill="#000"/><rect x="4" y="5" width="5" height="1" fill="#000"/><rect x="8" y="7" width="5" height="1" fill="#000"/><rect x="8" y="9" width="5" height="1" fill="#000"/></svg><span id="t31" class="t " style="left:96px;top:441px;letter-spacing:-0.111px;">Test_case7</span><div class="a" style="left:47px;top:465px;width:19px;height:1px;background:repeating-linear-gradient(to right,#000 0,#000 1px,transparent 1px,transparent 2px)"></div><svg class="ce" style="left:80px;top:460px" width="15" height="14" viewBox="0 0 15 14"><rect x="0" y="0" width="15" height="14" fill="#000"/><rect x="1" y="1" width="13" height="12" fill="#B4E4F4"/><rect x="4" y="2" width="1" height="10" fill="#78A8D8"/><rect x="8" y="2" width="1" height="10" fill="#78A8D8"/><rect x="12" y="2" width="1" height="10" fill="#78A8D8"/><rect x="3" y="2" width="11" height="1" fill="#98C8E8"/><rect x="1" y="1" width="2" height="1" fill="#000"/><rect x="4" y="5" width="5" height="1" fill="#000"/><rect x="8" y="7" width="5" height="1" fill="#000"/><rect x="8" y="9" width="5" height="1" fill="#000"/></svg><span id="t32" class="t " style="left:96px;top:459px;letter-spacing:-0.111px;">Test_case8</span><div class="a" style="left:47px;top:519px;width:19px;height:1px;background:repeating-linear-gradient(to right,#000 0,#000 1px,transparent 1px,transparent 2px)"></div><svg class="ce" style="left:80px;top:514px" width="15" height="14" viewBox="0 0 15 14"><rect x="0" y="0" width="15" height="14" fill="#000"/><rect x="1" y="1" width="13" height="12" fill="#B4E4F4"/><rect x="4" y="2" width="1" height="10" fill="#78A8D8"/><rect x="8" y="2" width="1" height="10" fill="#78A8D8"/><rect x="12" y="2" width="1" height="10" fill="#78A8D8"/><rect x="3" y="2" width="11" height="1" fill="#98C8E8"/><rect x="1" y="1" width="2" height="1" fill="#000"/><rect x="4" y="5" width="5" height="1" fill="#000"/><rect x="8" y="7" width="5" height="1" fill="#000"/><rect x="8" y="9" width="5" height="1" fill="#000"/></svg><span id="t33" class="t " style="left:96px;top:513px;letter-spacing:-0.111px;">Test_case2</span><div class="a" style="left:47px;top:537px;width:19px;height:1px;background:repeating-linear-gradient(to right,#000 0,#000 1px,transparent 1px,transparent 2px)"></div><svg class="ce" style="left:80px;top:532px" width="15" height="14" viewBox="0 0 15 14"><rect x="0" y="0" width="15" height="14" fill="#000"/><rect x="1" y="1" width="13" height="12" fill="#B4E4F4"/><rect x="4" y="2" width="1" height="10" fill="#78A8D8"/><rect x="8" y="2" width="1" height="10" fill="#78A8D8"/><rect x="12" y="2" width="1" height="10" fill="#78A8D8"/><rect x="3" y="2" width="11" height="1" fill="#98C8E8"/><rect x="1" y="1" width="2" height="1" fill="#000"/><rect x="4" y="5" width="5" height="1" fill="#000"/><rect x="8" y="7" width="5" height="1" fill="#000"/><rect x="8" y="9" width="5" height="1" fill="#000"/></svg><span id="t34" class="t " style="left:96px;top:531px;letter-spacing:-0.111px;">Test_case1</span><div class="a" style="left:22px;top:555px;width:17px;height:1px;background:repeating-linear-gradient(to right,#000 0,#000 1px,transparent 1px,transparent 2px)"></div><div class="a" style="left:39px;top:549px;width:13px;height:13px;box-sizing:border-box;border:1px solid #000;background:#C0C0C0"></div><div style="position:absolute;left:42px;top:555px;width:7px;height:1px;background:#000;"></div></div></div><div class="sbv" style="left:999px;top:348px;height:203px"></div><div class="sbtn" style="left:1000px;top:348px;width:15px;height:16px"><svg class="" style="left:0px;top:0px" width="13" height="14" viewBox="0 0 13 14"><path d="M2.5 8.5 L6.5 4.5 L10.5 8.5" fill="none" stroke="#4D6185" stroke-width="2.3" /></svg></div><div class="sbtn" style="left:1000px;top:534px;width:15px;height:16px"><svg class="" style="left:0px;top:0px" width="13" height="14" viewBox="0 0 13 14"><path d="M2.5 5 L6.5 9 L10.5 5" fill="none" stroke="#4D6185" stroke-width="2.3" /></svg></div><div class="sthv" style="left:1000px;top:365px;height:146px"><div class="a" style="left:0;top:68px"><div style="position:absolute;left:3px;top:0px;width:6px;height:1px;background:#EEF4FE;"></div><div style="position:absolute;left:4px;top:1px;width:6px;height:1px;background:#8CB0F8;"></div><div style="position:absolute;left:3px;top:2px;width:6px;height:1px;background:#EEF4FE;"></div><div style="position:absolute;left:4px;top:3px;width:6px;height:1px;background:#8CB0F8;"></div><div style="position:absolute;left:3px;top:4px;width:6px;height:1px;background:#EEF4FE;"></div><div style="position:absolute;left:4px;top:5px;width:6px;height:1px;background:#8CB0F8;"></div><div style="position:absolute;left:3px;top:6px;width:6px;height:1px;background:#EEF4FE;"></div><div style="position:absolute;left:4px;top:7px;width:6px;height:1px;background:#8CB0F8;"></div></div></div><div class="sbh" style="left:8px;top:551px;width:991px"></div><div class="sbtn" style="left:8px;top:552px;width:16px;height:15px"><svg class="" style="left:0px;top:0px" width="14" height="13" viewBox="0 0 14 13"><path d="M8.5 2.5 L4.5 6.5 L8.5 10.5" fill="none" stroke="#4D6185" stroke-width="2.3" /></svg></div><div class="sbtn" style="left:982px;top:552px;width:16px;height:15px"><svg class="" style="left:0px;top:0px" width="14" height="13" viewBox="0 0 14 13"><path d="M5.5 2.5 L9.5 6.5 L5.5 10.5" fill="none" stroke="#4D6185" stroke-width="2.3" /></svg></div><div class="sthh" style="left:134px;top:552px;width:758px"><div class="a" style="top:0;left:374px"><div style="position:absolute;left:0px;top:3px;width:1px;height:6px;background:#EEF4FE;"></div><div style="position:absolute;left:1px;top:4px;width:1px;height:6px;background:#8CB0F8;"></div><div style="position:absolute;left:2px;top:3px;width:1px;height:6px;background:#EEF4FE;"></div><div style="position:absolute;left:3px;top:4px;width:1px;height:6px;background:#8CB0F8;"></div><div style="position:absolute;left:4px;top:3px;width:1px;height:6px;background:#EEF4FE;"></div><div style="position:absolute;left:5px;top:4px;width:1px;height:6px;background:#8CB0F8;"></div><div style="position:absolute;left:6px;top:3px;width:1px;height:6px;background:#EEF4FE;"></div><div style="position:absolute;left:7px;top:4px;width:1px;height:6px;background:#8CB0F8;"></div></div></div><div style="position:absolute;left:999px;top:551px;width:17px;height:17px;background:#FEFEFB;"></div><div style="position:absolute;left:1005px;top:560px;width:3px;height:8px;background:#0A24C8;"></div><span id="t35" class="t " style="left:7px;top:578px;letter-spacing:0.205px;">Current events: [24:42]</span><span id="t36" class="t " style="left:135px;top:578px;letter-spacing:0.067px;">Total events: 96</span><span id="t37" class="t " style="left:407px;top:578px;">Total duration: 194419500</span><span id="t38" class="t " style="left:614px;top:578px;letter-spacing:0.100px;">Filters off</span><span id="t39" class="t " style="left:821.5px;top:578px;letter-spacing:-0.182px;">PPS: 44000.0</span><span id="t40" class="t " style="left:900px;top:578px;">Overview scale: 0.3</span><div class="ssep" style="left:399px"></div><div class="ssep" style="left:607px"></div><div class="ssep" style="left:815px"></div>
</body></html>
